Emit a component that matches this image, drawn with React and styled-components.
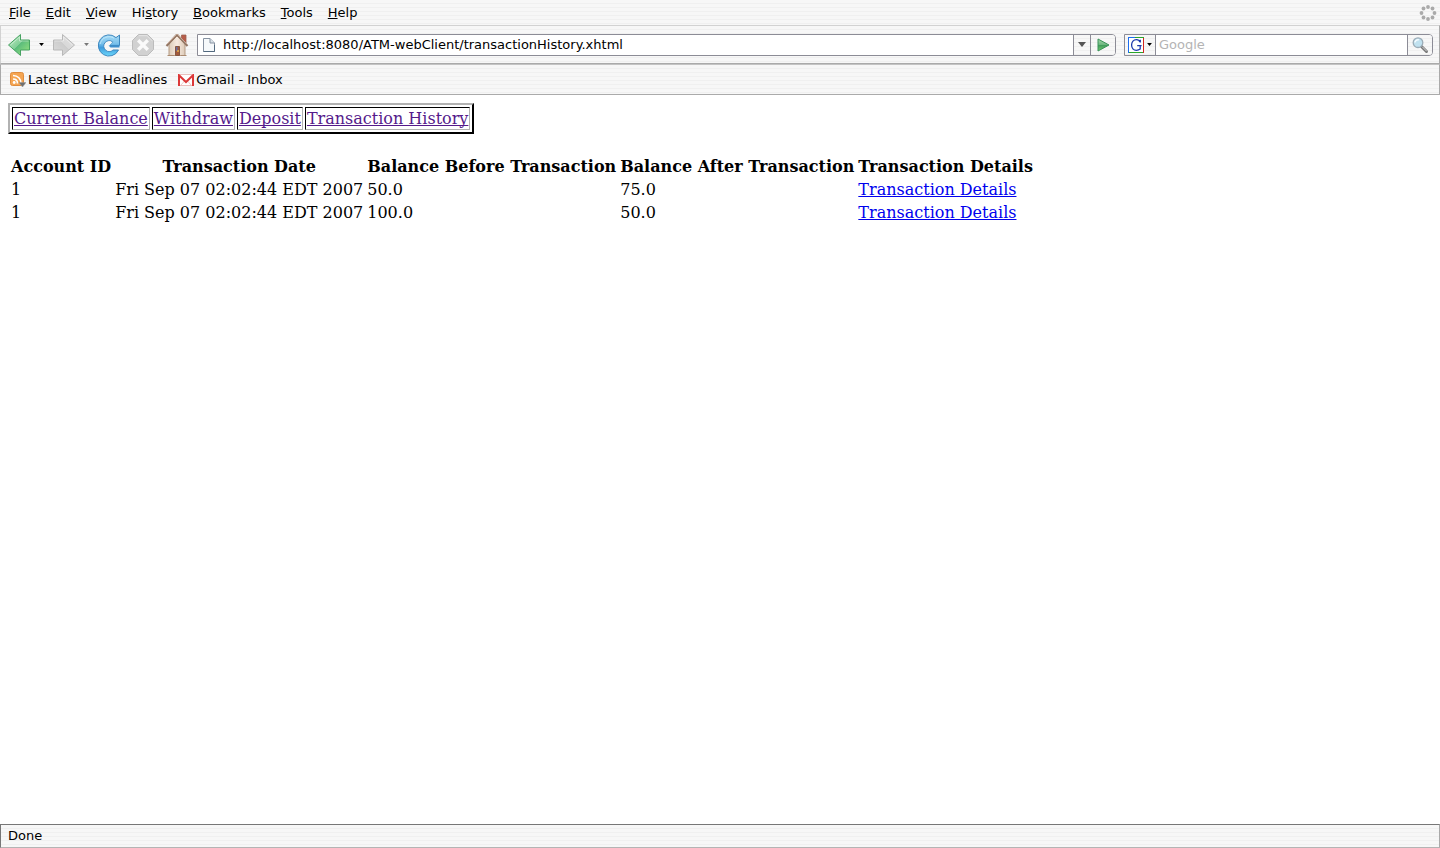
import React from "react";
import styled, { createGlobalStyle, css } from "styled-components";

const Global = createGlobalStyle`
  * { box-sizing: border-box; }
  body { margin: 0; background: #fff; color: #000; }
  button, input { font: inherit; color: inherit; }
  svg { display: block; flex: none; }
`;

const stripes = css`
  background: repeating-linear-gradient(to bottom, #f7f7f7 0 3px, #f0f0f0 3px 4px);
`;

const Window = styled.div`
  display: flex;
  flex-direction: column;
  min-height: 100vh;
  font: 13px/16px "DejaVu Sans", sans-serif;
`;

const MenuBar = styled.nav`
  ${stripes}
  display: flex;
  align-items: center;
  gap: 1px;
  height: 25px;
  padding: 0 3px 0 2px;
`;

const MenuButton = styled.button`
  border: 0;
  background: none;
  padding: 0 7px;
  white-space: nowrap;
  u { text-underline-offset: 1px; text-decoration-thickness: 1px; }
`;

const Throbber = styled.div`
  margin-left: auto;
`;

const Toolbar = styled.div`
  ${stripes}
  display: flex;
  align-items: center;
  height: 39px;
  padding: 0 6px 0 5px;
  border: 1px solid #d2d2d2;
  border-right-color: #aaa;
  border-bottom-color: #aaa;
`;

const IconButton = styled.button`
  display: flex;
  align-items: center;
  justify-content: center;
  width: ${(p) => p.$width}px;
  height: 26px;
  padding: 0;
  border: 0;
  background: none;
`;

const Field = styled.form`
  display: flex;
  height: 22px;
  border: 1px solid #8c8c96;
  border-radius: 0 4px 4px 0;
  background: #fff;
  overflow: hidden;
  flex: ${(p) => (p.$grow ? "1 1 0" : "0 1 309px")};
  margin-left: ${(p) => (p.$grow ? 7 : 8)}px;
  min-width: 0;
`;

const FieldInput = styled.input`
  flex: 1;
  min-width: 0;
  border: 0;
  outline: 0;
  padding: 0 3px;
  background: none;
  &::placeholder { color: #b4b4b4; opacity: 1; }
`;

const PageIcon = styled.span`
  display: flex;
  align-items: center;
  padding: 0 4px;
`;

const FieldButton = styled.button`
  ${stripes}
  display: flex;
  align-items: center;
  justify-content: center;
  gap: 3px;
  flex: none;
  width: ${(p) => p.$width}px;
  padding: 0;
  border: 0 solid #8c8c96;
  border-left-width: ${(p) => (p.$lead ? 0 : 1)}px;
  border-right-width: ${(p) => (p.$lead ? 1 : 0)}px;
`;

const BookmarkBar = styled.div`
  ${stripes}
  display: flex;
  align-items: center;
  gap: 11px;
  height: 31px;
  padding: 0 9px;
  border: 1px solid #aaa;
  border-top-color: #c4c4c4;
`;

const Bookmark = styled.button`
  display: flex;
  align-items: center;
  gap: 2px;
  padding: 0;
  border: 0;
  background: none;
  white-space: nowrap;
`;

const Page = styled.main`
  flex: 1;
  padding: 8px;
  font: 16px/19px "DejaVu Serif", serif;
`;

const NavTable = styled.table`
  border: 2px solid;
  border-color: #b2b2b2 #000 #000 #b2b2b2;
  border-spacing: 2px;
  margin-bottom: 20px;
  td {
    padding: 1px;
    border: 1px solid;
    border-color: #000 #b2b2b2 #b2b2b2 #000;
    white-space: nowrap;
  }
`;

const HistoryTable = styled.table`
  border-spacing: 2px;
  th, td { padding: 1px; white-space: nowrap; }
`;

const PageLink = styled.a`
  color: ${(p) => (p.$visited ? "#551a8b" : "#0000ee")};
  text-decoration: underline;
  text-decoration-thickness: 1px;
  text-underline-offset: 1px;
  text-decoration-skip-ink: none;
`;

const StatusBar = styled.footer`
  ${stripes}
  height: 24px;
  padding: 3px 7px;
  border: 1px solid #777;
  border-right-color: #aaa;
  border-bottom-color: #b4b4b4;
`;

const Arrow = ({ forward }) => (
  <svg width="24" height="24" viewBox="0 0 24 24" transform={forward ? "scale(-1 1)" : undefined}>
    <defs>
      <linearGradient id={forward ? "fwd" : "back"} x1="0" y1="0" x2="1" y2="1">
        <stop offset="0" stopColor={forward ? "#e4e4e4" : "#c8efcb"} />
        <stop offset=".48" stopColor={forward ? "#d8d8d8" : "#82cf97"} />
        <stop offset=".5" stopColor={forward ? "#cccccc" : "#5cbc7c"} />
        <stop offset="1" stopColor={forward ? "#dcdcdc" : "#9ce77e"} />
      </linearGradient>
    </defs>
    <path d="M1.5 12 13.5 1.5V7h9v10h-9v5.5Z" fill={`url(#${forward ? "fwd" : "back"})`} stroke={forward ? "#b8b8b8" : "#46a261"} strokeLinejoin="round" />
    <path d="M3.5 12 12.5 4V8h9" fill="none" stroke="#fff" strokeOpacity=".4" />
  </svg>
);

const Caret = ({ color = "#000", size = 5 }) => (
  <svg width={size} height={size === 5 ? 3 : 5} viewBox="0 0 8 5"><path d="M0 0h8L4 5Z" fill={color} /></svg>
);

const ReloadIcon = () => (
  <svg width="24" height="24" viewBox="0 0 24 24">
    <defs><linearGradient id="reload" x2="0" y2="1"><stop stopColor="#a4daf5" /><stop offset=".4" stopColor="#7cc2ec" /><stop offset=".6" stopColor="#3f9bdc" /><stop offset="1" stopColor="#6cd8fb" /></linearGradient></defs>
    <path d="M19 4.6 22.5 2v10.5H12.2l3.4-3.6A5.4 5.4 0 1 0 15.9 17l5.6 0A10.6 10.6 0 1 1 19 4.6Z" fill="url(#reload)" stroke="#3f88bf" strokeLinejoin="round" />
    <path d="M15.2 9.3A4.8 4.8 0 1 0 16.2 16h-3.4v-3.4h-.6Z" fill="#f7f7f7" />
    <path d="M11.5 12.5h11v2h-9Z" fill="#3f8fcd" />
    <path d="M3.2 11A9 9 0 0 1 17 5.2" fill="none" stroke="#d6f3ff" strokeOpacity=".6" />
  </svg>
);

const StopIcon = () => (
  <svg width="24" height="24" viewBox="0 0 24 24">
    <path d="M7.5 1.5h9l6 6v9l-6 6h-9l-6-6v-9Z" fill="#d1d1d1" stroke="#bcbcbc" />
    <path d="M8 2.7h8l5.3 5.2" fill="none" stroke="#e5e5e5" />
    <path d="m7.2 7.2 9.6 9.6m0-9.6-9.6 9.6" stroke="#fafafa" strokeWidth="3.4" />
  </svg>
);

const HomeIcon = () => (
  <svg width="24" height="24" viewBox="0 0 24 24">
    <defs><linearGradient id="wall"><stop stopColor="#dccbb8" /><stop offset=".5" stopColor="#f7eadf" /><stop offset="1" stopColor="#dccab8" /></linearGradient></defs>
    <path d="M16.5 2h4.5v8h-4.5z" fill="#b75c49" stroke="#9b6352" strokeWidth=".8" />
    <path d="M4 11 12 3l8 8v11.5H4Z" fill="url(#wall)" stroke="#b59b83" />
    <path d="m1.5 13 10-11h1l10 11" fill="none" stroke="#927563" strokeWidth="2" />
    <path d="m2 11.2 9.5-9.7h1l9.5 9.7" fill="none" stroke="#ccb09e" />
    <path d="M10.5 13.5h4v9h-4z" fill="#a35a3c" stroke="#855743" />
    <path d="M11 14h1.5v4H11Z" fill="#696c9f" /><circle cx="13" cy="18" r="1" fill="#e6b34b" />
    <path d="M2.5 22.5H9m7 0h5.5" stroke="#a98a70" />
  </svg>
);

const DocumentIcon = () => (
  <svg width="14" height="16" viewBox="0 0 14 16">
    <path d="M1.5 1.5H8l4.5 4.5v8.5h-11Z" fill="#f6f9fb" stroke="#8792a1" />
    <path d="M8 1.5V6h4.5" fill="#d9e2e9" stroke="#8792a1" />
    <path d="M1.5 14.5h11V8" fill="none" stroke="#52697e" />
  </svg>
);

const GoIcon = () => (
  <svg width="14" height="14" viewBox="0 0 14 14">
    <defs><linearGradient id="go" x2="0" y2="1"><stop stopColor="#a9d6ac" /><stop offset=".5" stopColor="#69b67d" /><stop offset=".52" stopColor="#409c5c" /><stop offset="1" stopColor="#79ce70" /></linearGradient></defs>
    <path d="M2 1 13 7 2 13Z" fill="url(#go)" stroke="#389258" strokeLinejoin="round" />
  </svg>
);

const GoogleIcon = () => (
  <svg width="16" height="16" viewBox="0 0 16 16">
    <path fill="#fff" d="M0 0h16v16H0z" />
    <path d="M.5 16V0M0 .5h7" stroke="#1c6df0" /><path d="M7 .5h9M1 15.5h14" stroke="#2aa52a" /><path d="M15.5 1v15" stroke="#d22620" />
    <path d="M12.3 5.4V2.7M12 5C11.4 3.4 10.2 2.7 8.4 2.7 5.5 2.7 3.6 4.9 3.6 8s1.8 5.3 4.8 5.3c1.5 0 2.8-.5 3.8-1.3V8.8M9.2 8.6h4.4" fill="none" stroke="#1d3aad" strokeWidth="1.3" />
  </svg>
);

const SearchIcon = () => (
  <svg width="18" height="18" viewBox="0 0 18 18">
    <path d="m10.5 10.5 5 5" stroke="#777" strokeWidth="3" strokeLinecap="round" />
    <path d="m11.5 11 4 4" stroke="#ddd" strokeLinecap="round" />
    <circle cx="7" cy="6.7" r="4.8" fill="#c0e1ef" stroke="#9bacb7" strokeWidth="1.3" />
    <path d="M4 6.6c0-2 1.8-3.3 4-2.7" fill="none" stroke="#f4fbff" strokeWidth="1.5" />
  </svg>
);

const FeedIcon = () => (
  <svg width="16" height="16" viewBox="0 0 16 16">
    <rect x=".5" y=".5" width="13" height="13" rx="2" fill="#f5a552" stroke="#df8c3d" />
    <path d="M3 3.5c5 0 8 3.5 8 8M3 7c3 0 4.5 2 4.5 4.5" fill="none" stroke="#fff" strokeWidth="1.6" />
    <circle cx="4.2" cy="10.5" r="1.4" fill="#fff" />
    <path d="M9 10.5h7L12.5 15Z" fill="#707070" stroke="#999" strokeWidth=".5" />
  </svg>
);

const MailIcon = () => (
  <svg width="16" height="12" viewBox="0 0 16 12">
    <path d="M0 0h16v12H0z" fill="#fff" />
    <path d="m3 11 3.5-4M13 11 9.5 7" stroke="#f0cbc9" />
    <path d="M1 12V1.2L8 8l7-6.8V12" fill="none" stroke="#dc3838" strokeWidth="2" />
    <path d="M2 .5h12M2 11.5h12" stroke="#e4afac" strokeWidth=".8" />
  </svg>
);

const LoadingIcon = () => (
  <svg width="18" height="18" viewBox="0 0 18 18" fill="#aaa">
    {[[9, 3], [13.5, 4.5], [15.5, 9], [13.5, 13.5], [9, 15], [4.5, 13.5], [2.5, 9], [4.5, 4.5]].map(([x, y]) => <circle key={`${x}-${y}`} cx={x} cy={y} r="1.9" />)}
  </svg>
);

const menus = [["", "F", "ile"], ["", "E", "dit"], ["", "V", "iew"], ["Hi", "s", "tory"], ["", "B", "ookmarks"], ["", "T", "ools"], ["", "H", "elp"]];
const pages = ["Current Balance", "Withdraw", "Deposit", "Transaction History"];
const headings = ["Account ID", "Transaction Date", "Balance Before Transaction", "Balance After Transaction", "Transaction Details"];
const transactions = [
  ["1", "Fri Sep 07 02:02:44 EDT 2007", "50.0", "75.0"],
  ["1", "Fri Sep 07 02:02:44 EDT 2007", "100.0", "50.0"],
];

export default function App() {
  return (
    <Window>
      <Global />
      <MenuBar>
        {menus.map(([before, key, after]) => <MenuButton key={after}>{before}<u>{key}</u>{after}</MenuButton>)}
        <Throbber><LoadingIcon /></Throbber>
      </MenuBar>
      <Toolbar>
        <IconButton $width={26} aria-label="Back"><Arrow /></IconButton>
        <IconButton $width={19} aria-label="Back history"><Caret /></IconButton>
        <IconButton $width={26} aria-label="Forward"><Arrow forward /></IconButton>
        <IconButton $width={19} aria-label="Forward history"><Caret color="#777" /></IconButton>
        <IconButton $width={26} aria-label="Reload"><ReloadIcon /></IconButton>
        <IconButton $width={42} aria-label="Stop"><StopIcon /></IconButton>
        <IconButton $width={26} aria-label="Home"><HomeIcon /></IconButton>
        <Field $grow onSubmit={(e) => e.preventDefault()}>
          <PageIcon><DocumentIcon /></PageIcon>
          <FieldInput aria-label="Address" defaultValue="http://localhost:8080/ATM-webClient/transactionHistory.xhtml" />
          <FieldButton type="button" $width={17} aria-label="Address history"><Caret color="#555" size={8} /></FieldButton>
          <FieldButton $width={25} aria-label="Go"><GoIcon /></FieldButton>
        </Field>
        <Field onSubmit={(e) => e.preventDefault()}>
          <FieldButton type="button" $width={31} $lead aria-label="Search engine"><GoogleIcon /><Caret /></FieldButton>
          <FieldInput aria-label="Search" placeholder="Google" />
          <FieldButton $width={25} aria-label="Search"><SearchIcon /></FieldButton>
        </Field>
      </Toolbar>
      <BookmarkBar>
        <Bookmark><FeedIcon />Latest BBC Headlines</Bookmark>
        <Bookmark><MailIcon />Gmail - Inbox</Bookmark>
      </BookmarkBar>
      <Page>
        <NavTable>
          <tbody><tr>{pages.map((page) => <td key={page}><PageLink $visited href="#">{page}</PageLink></td>)}</tr></tbody>
        </NavTable>
        <HistoryTable>
          <thead><tr>{headings.map((heading) => <th key={heading}>{heading}</th>)}</tr></thead>
          <tbody>
            {transactions.map((row, i) => (
              <tr key={i}>
                {row.map((value, j) => <td key={j}>{value}</td>)}
                <td><PageLink href="#">Transaction Details</PageLink></td>
              </tr>
            ))}
          </tbody>
        </HistoryTable>
      </Page>
      <StatusBar>Done</StatusBar>
    </Window>
  );
}
